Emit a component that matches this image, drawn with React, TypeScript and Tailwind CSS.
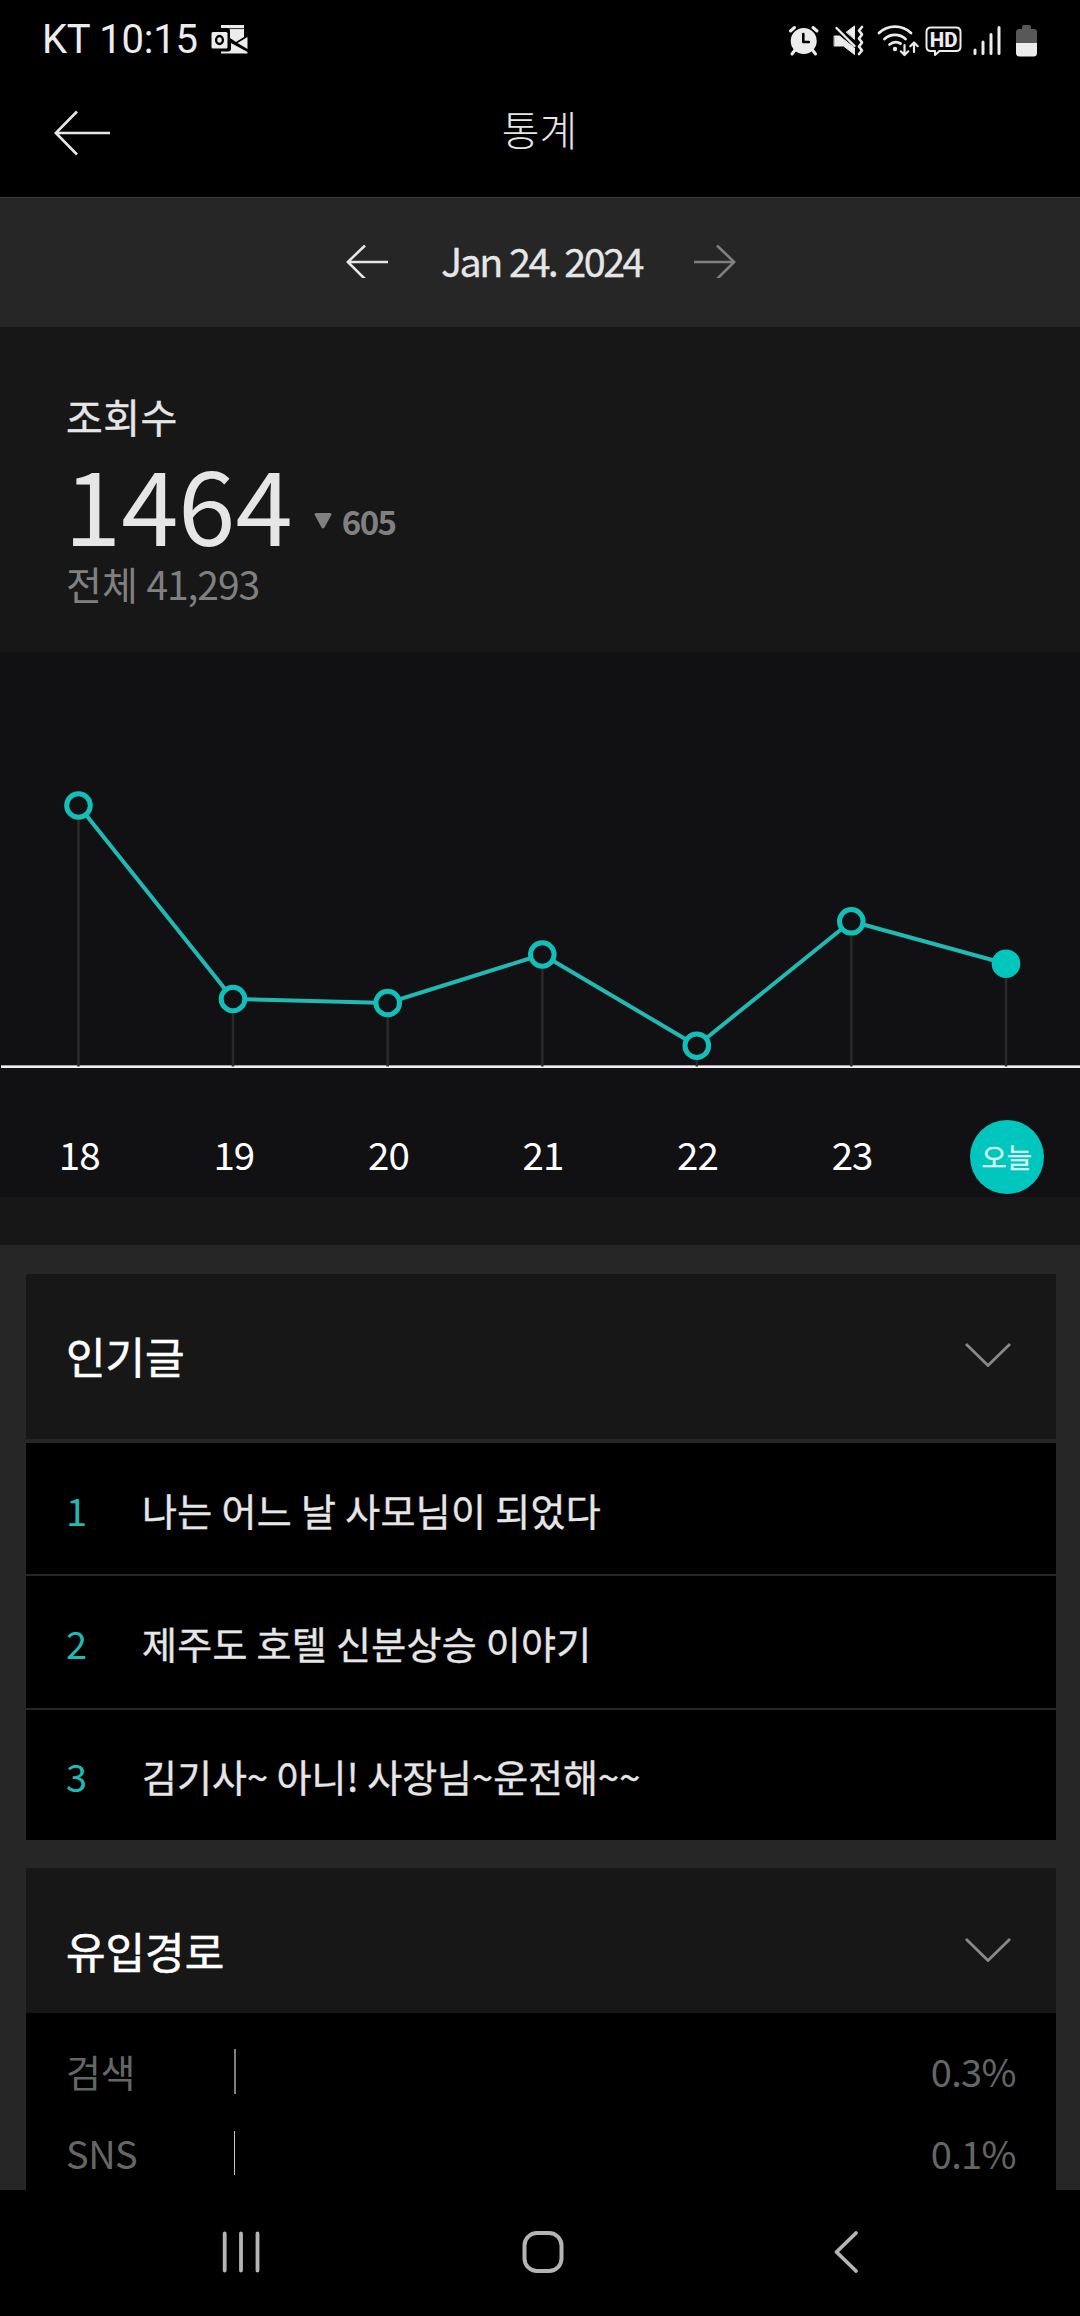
import type { ReactNode } from "react"

const FONT = "font-['Noto_Sans_CJK_KR','Noto_Sans',sans-serif]"

const days = [
  { label: "18", x: 78.5, y: 153.5 },
  { label: "19", x: 233, y: 347 },
  { label: "20", x: 387.7, y: 351 },
  { label: "21", x: 542.3, y: 302.5 },
  { label: "22", x: 696.8, y: 393.7 },
  { label: "23", x: 851.3, y: 269.3 },
  { label: "오늘", x: 1006, y: 311.7, today: true },
]

const posts = [
  { title: "나는 어느 날 사모님이 되었다", row: "h-[131px] tracking-[0.35px]" },
  { title: "제주도 호텔 신분상승 이야기", row: "h-[132px] tracking-[0.3px]" },
  { title: "김기사~ 아니! 사장님~운전해~~", row: "h-[130px]" },
]

const sources = [
  { name: "검색", percent: "0.3%", bar: "h-[45px] w-[2px] bg-[#808080]" },
  { name: "SNS", percent: "0.1%", bar: "h-[44px] w-px bg-[#c4c4c4]" },
]

const StatusBar = () => (
  <div className="flex h-20 shrink-0 items-center justify-between pl-[42px] pr-[42px]">
    <div className="flex items-center">
      <span className="font-[Roboto,sans-serif] text-[40px] leading-[80px] tracking-[-0.25px] whitespace-pre text-[#ececec]">
        KT 10:15
      </span>
      <svg className="ml-[13px]" width="38" height="30" viewBox="0 0 38 30">
        <path d="M10 0h23v12l-8 5-6-4V6c0-2-1-3-3-3h-6z" fill="#ececec" />
        <path d="M11 3.6h22" stroke="#000" strokeWidth="0.8" />
        <path d="M36.500 12v12l-10-6zM20 18l16.500 9v1.500H10v-2h7c2 0 3-1 3-3z" fill="#ececec" />
        <rect x="0.500" y="7" width="16" height="16.500" rx="1.500" fill="#ececec" />
        <ellipse cx="8.500" cy="15" rx="3.400" ry="4" fill="none" stroke="#000" strokeWidth="2.400" />
      </svg>
    </div>
    <svg width="250" height="34" viewBox="788 22 250 34" fill="none" stroke="#ececec" strokeLinecap="round" strokeLinejoin="round">
      {/* alarm */}
      <circle cx="803.700" cy="40" r="13" fill="#ececec" stroke="none" />
      <path d="M790.500 30l4-3.500M817 30l-4-3.500M795 49l-3 4M812.500 49l3 4" strokeWidth="3" />
      <path d="M803.300 33v8h5.500" stroke="#000" strokeWidth="2.600" />
      {/* muted speaker with vibration */}
      <path d="M834.500 35h5l15 12v6.500l-11-8.500h-9z" fill="#ececec" strokeWidth="1" />
      <path d="M846.500 31l8-6v13z" fill="#ececec" strokeWidth="1" />
      <path d="M836.500 27l18 18" strokeWidth="2.400" />
      <path d="M862 26l-3 3.500 3 4-3 4 3 4-3 4 3 4-3 3.500" strokeWidth="2.600" />
      {/* wifi */}
      <path d="M879 32c9-8.500 23-8.500 32 0M884.500 38c6-5.500 15-5.500 21 0M889.500 43.500c4-3 7.500-3 11 -1" strokeWidth="2.800" />
      <circle cx="895" cy="48" r="2.200" fill="#ececec" stroke="none" />
      <path d="M904.500 44v9.500M900.800 50.300l3.700 3.700 3.700-3.700M914 51v-9M910.300 45.200l3.700-3.700 3.700 3.700" strokeWidth="2.200" />
      {/* HD */}
      <path d="M931 26.500h25q4.500 0 4.500 4.500v14.500q0 4.500-4.500 4.500h-16.500l-4.500 4v-4h-4q-4.500 0-4.500-4.500v-14.500q0-4.500 4.500-4.500z" strokeWidth="2" />
      <text x="943.700" y="45.500" textAnchor="middle" fontFamily="Roboto" fontSize="20.500" fontWeight="800" fill="#ececec" stroke="none">HD</text>
      {/* signal */}
      <path d="M975 49v3.500M983 41v11.500M991 33.500v19M999 26.500v26" strokeWidth="3" />
      {/* battery */}
      <path d="M1016 42V31q0-3 3-3h3v-2q0-2 2-2h5q2 0 2 2v2h3q3 0 3 3v11z" fill="#585858" stroke="none" />
      <path d="M1016 42h21v10q0 3.500-3.500 3.500h-14q-3.500 0-3.500-3.500z" fill="#ececec" stroke="none" />
    </svg>
  </div>
)

const Header = () => (
  <header className="grid h-[118px] shrink-0 grid-cols-3 items-start border-b border-[#3a3a3a] px-[54px] pt-5">
    <svg className="mt-[10px]" width="57" height="46" viewBox="0 0 57 46" fill="none" stroke="#e6e6e6" strokeWidth="2.600">
      <path d="M56 23H2M23 1.500L1.800 23l21.200 21.500" />
    </svg>
    <h1 className="-mt-px -ml-px text-center text-[41px] leading-[58px] font-light text-[#e6e6e6]">통계</h1>
  </header>
)

const DateBar = () => (
  <div className="flex h-[129px] shrink-0 items-center justify-center bg-[#262626] pl-[2px]">
    <svg className="-mt-[2px]" width="42" height="33" viewBox="0 0 42 33" fill="none" stroke="#e6e6e6" strokeWidth="2.600">
      <path d="M42 17H2M19 0.500L1.800 17l17.200 17" />
    </svg>
    <span className="w-[306px] pb-[6px] pl-px text-center text-[39.500px] leading-[58px] tracking-[-2.5px] [word-spacing:1.7px] whitespace-nowrap text-[#e6e6e6] [-webkit-text-stroke:0.3px]">
      Jan 24. 2024
    </span>
    <svg className="-mt-[2px]" width="42" height="33" viewBox="0 0 42 33" fill="none" stroke="#808080" strokeWidth="2.600">
      <path d="M0 17h40M23 0.500L40.200 17 23 34" />
    </svg>
  </div>
)

const Summary = () => (
  <section className="h-[325px] shrink-0 bg-[#171717] pt-[59px] pl-[66px]">
    <h2 className="text-[40px] leading-[60px] tracking-[0.4px] text-[#e6e6e6] [-webkit-text-stroke:0.4px]">조회수</h2>
    <div className="-ml-[2px] flex h-28">
      <span className="text-[103px] leading-[112px] text-[#e6e6e6]">1464</span>
      <svg className="mt-[67px] ml-[21px]" width="18" height="16" viewBox="0 0 18 16">
        <path d="M0.500 1.500Q0.500 0 2 0h14Q17.500 0 17.500 1.500L10.500 14.500q-1.500 2-3 0z" fill="#808080" />
      </svg>
      <span className="mt-[50px] ml-[10px] text-[33px] leading-[50px] font-bold tracking-[-1.5px] text-[#808080]">605</span>
    </div>
    <p className="text-[39px] leading-[50px] text-[#808080]">
      전체 <span className="tracking-[-1.1px]">41,293</span>
    </p>
  </section>
)

const Chart = () => (
  <section className="h-[545px] shrink-0 overflow-hidden bg-[#111113]">
    <svg className="block" width="1080" height="420" viewBox="0 0 1080 420">
      <rect x="1" y="413" width="1079" height="1" fill="#a0a0a0" />
      <rect x="1" y="414" width="1079" height="2" fill="#f0f0f0" />
      {days.map((d) => (
        <line key={d.label} x1={d.x} x2={d.x} y1={d.y} y2="414.500" stroke="#2a2a2b" strokeWidth="2.500" />
      ))}
      <polyline points={days.map((d) => `${d.x},${d.y}`).join(" ")} fill="none" stroke="#20b9b4" strokeWidth="4" />
      {days.map((d) => (
        <circle
          key={d.label}
          cx={d.x}
          cy={d.y}
          r="11.800"
          fill={d.today ? "#00c6be" : "#111113"}
          stroke={d.today ? "#00c6be" : "#13c0b9"}
          strokeWidth="5"
        />
      ))}
    </svg>
    <div className="ml-[2px] grid w-[1082px] grid-cols-7 pt-[47px]">
      {days.map((d) => (
        <div key={d.label} className="flex h-[78px] items-start justify-center">
          {d.today ? (
            <span className="mt-px flex size-[74px] items-center justify-center rounded-full bg-[#00c6be] text-[27.500px] leading-none text-[#d9ffff] [-webkit-text-stroke:0.3px]">
              {d.label}
            </span>
          ) : (
            <span className="mt-[5px] text-[38.500px] leading-[58px] tracking-[-0.9px] text-white">{d.label}</span>
          )}
        </div>
      ))}
    </div>
  </section>
)

const CardHeader = ({ title, className }: { title: string; className: string }) => (
  <div className={`flex items-center justify-between bg-[#171717] pr-[45px] pl-10 ${className}`}>
    <h3 className="text-[43px] leading-[60px] text-white [-webkit-text-stroke:0.6px]">{title}</h3>
    <svg width="46" height="24" viewBox="0 0 46 24" fill="none" stroke="#888" strokeWidth="2.800">
      <path d="M1 1l22 21.500L45 1" />
    </svg>
  </div>
)

const Row = ({ children, className }: { children: ReactNode; className: string }) => (
  <li className={`flex items-center bg-black pl-10 text-[38px] leading-[58px] ${className}`}>{children}</li>
)

const NavBar = () => (
  <nav className="flex h-[126px] shrink-0 items-center justify-center bg-black pb-[2px]">
    <svg width="640" height="46" viewBox="220 2229 640 46" fill="none" stroke="#b4b4b4" strokeLinecap="round" strokeLinejoin="round">
      <path d="M224.700 2233.500v37M241 2233.500v37M257.500 2233.500v37" strokeWidth="3.800" />
      <rect x="524.500" y="2233" width="37" height="38" rx="12.500" strokeWidth="4" />
      <path d="M856 2233l-19.500 19L856 2271" strokeWidth="3.800" />
    </svg>
  </nav>
)

export default function App() {
  return (
    <div className={`flex h-[2316px] w-[1080px] flex-col overflow-hidden bg-black ${FONT}`}>
      <StatusBar />
      <Header />
      <DateBar />
      <Summary />
      <Chart />
      <div className="h-12 shrink-0 bg-[#171717]" />
      <main className="flex min-h-0 flex-1 flex-col gap-7 overflow-hidden bg-[#262626] pt-[29px] pr-6 pl-[26px]">
        <section className="shrink-0">
          <CardHeader title="인기글" className="h-[165px] pb-[3px]" />
          <ol className="mt-1 flex flex-col gap-[2px]">
            {posts.map((post, i) => (
              <Row key={post.title} className={`pt-[2px] ${post.row}`}>
                <span className="w-[76px] text-[#1fbab4]">{i + 1}</span>
                <span className="whitespace-nowrap text-[#e6e6e6] [-webkit-text-stroke:0.4px]">{post.title}</span>
              </Row>
            ))}
          </ol>
        </section>
        <section className="shrink-0">
          <CardHeader title="유입경로" className="h-[145px] pt-[18px]" />
          <ul className="bg-black pt-[17px]">
            {sources.map((s) => (
              <Row key={s.name} className="h-[82px] pr-10 text-[#666]">
                <span className="w-[168px] tracking-[-0.5px]">{s.name}</span>
                <span className={s.bar} />
                <span className="ml-auto tracking-[-0.6px]">{s.percent}</span>
              </Row>
            ))}
          </ul>
        </section>
      </main>
      <NavBar />
    </div>
  )
}
